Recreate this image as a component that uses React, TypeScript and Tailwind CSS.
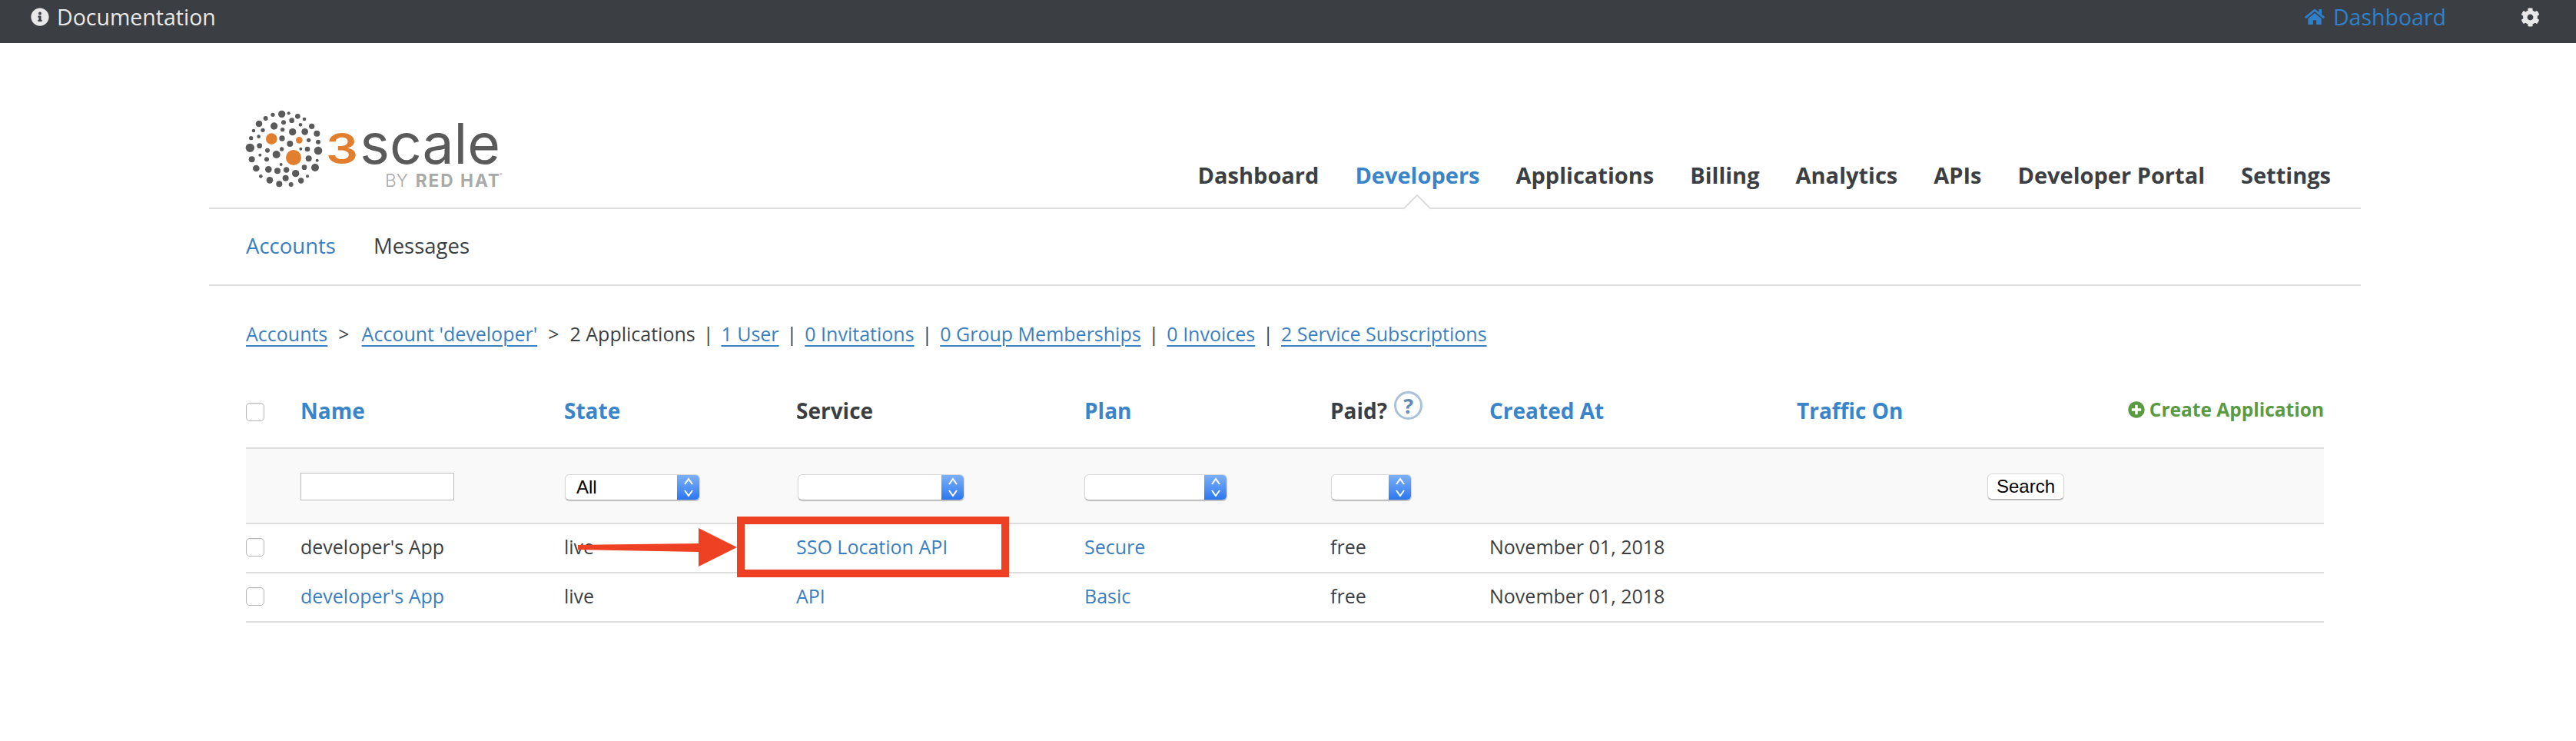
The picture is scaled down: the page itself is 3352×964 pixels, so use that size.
import React from "react";
import { FaInfoCircle, FaHome, FaCog, FaPlusCircle } from "react-icons/fa";

const gray: [number, number, number][] = [
  [200,55,14],[227,52,6],[165,58,8],[262,64,10],[137,72,9],[288,75,7],[239,80,10],[111,93,13],[207,88,9],[273,97,7],[317,103,11],[170,102,14],[90,120,7],[126,118,8],[203,116,8],[242,125,14],[290,124,13],[337,131,12],[80,149,8],[110,143,7],[201,150,11],[305,157,8],[342,164,9],[76,187,17],[113,179,10],[232,171,12],[274,191,6],[300,192,10],[342,198,16],[144,197,9],[200,192,8],[115,215,6],[179,213,15],[141,232,9],[305,229,12],[338,236,6],[83,232,12],[197,252,6],[100,267,13],[148,271,13],[183,277,12],[218,273,11],[288,263,10],[330,264,15],[254,287,14],[118,298,7],[300,298,6],[215,305,12],[153,313,13],[275,315,11],[190,328,12],[236,330,9],
];

function Logo() {
  return (
    <svg width="380" height="130" viewBox="0 0 1140 390" className="block">
      {gray.map(([x, y, r], i) => <circle key={i} cx={x} cy={y} r={r} fill="#5a5a5a" />)}
      <circle cx="160" cy="152" r="22" fill="#e17f2f" />
      <circle cx="268" cy="157" r="13" fill="#e17f2f" />
      <circle cx="246" cy="225" r="30" fill="#e17f2f" />
      <text x="372" y="250" fontFamily="Inter, sans-serif" fontSize="165" fontWeight="600" fill="#e17f2f" textLength="126" lengthAdjust="spacingAndGlyphs">3</text>
      <text x="505" y="250" fontFamily="Inter, sans-serif" fontSize="219" fontWeight="400" fill="#5a5a5a" textLength="548" lengthAdjust="spacingAndGlyphs">scale</text>
      <text x="603" y="340" fontFamily="Inter, sans-serif" fontSize="68" fontWeight="300" fill="#a9a9a9">BY</text>
      <text x="722" y="340" fontFamily="Inter, sans-serif" fontSize="68" fontWeight="700" letterSpacing="6" fill="#a9a9a9">RED HAT</text>
      <text x="1050" y="298" fontFamily="Inter, sans-serif" fontSize="16" fill="#a9a9a9">®</text>
    </svg>
  );
}

function Stepper() {
  return (
    <svg width="14" height="28" viewBox="0 0 14 28" fill="none" stroke="#fff" strokeWidth="2">
      <path d="M2 10 L7 3 L12 10" />
      <path d="M2 18 L7 25 L12 18" />
    </svg>
  );
}

function SelectBox({ width, label }: { width: string; label?: string }) {
  return (
    <div className={`${width} h-[34px] flex rounded-[6px] bg-white border border-[#d8d8d8] border-b-[#b0b0b0] shadow-[0_1px_1px_rgba(0,0,0,0.2)] overflow-hidden`}>
      <div className="flex-1 pl-[14px] text-[24px] leading-[32px] text-black font-['Liberation_Sans',sans-serif]">{label}</div>
      <div className="w-[29px] flex items-center justify-center bg-gradient-to-b from-[#7db0f5] to-[#2a76f2]">
        <Stepper />
      </div>
    </div>
  );
}

function Check() {
  return <input type="checkbox" className="block appearance-none w-[24px] h-[24px] rounded-[5px] bg-white border border-[#b4b4b4] shadow-[inset_0_1px_2px_rgba(0,0,0,0.08)]" />;
}

const blue = "text-[#3a80c0]";
const headBlue = "text-[#3a85c9]";
const linkU = "text-[#3a80c0] underline decoration-2 underline-offset-[5px]";
const th = "p-0 text-left font-bold text-[28px] leading-[40px]";
const td = "p-0 pb-[3px]";
const sel = "p-0 pt-[4px]";

function Gt({ first }: { first?: boolean }) { return <span className={first ? "ml-[14px] mr-[16px]" : "mx-[14px]"}>&gt;</span>; }
function Bar() { return <span className="mx-[10px]">|</span>; }

export default function App() {
  return (
    <div className="min-h-[964px] bg-white text-[#3b3f43] font-['Open_Sans',sans-serif]">
      <div className="h-[56px] bg-[#3b3f43] flex justify-between pl-[40px] pr-[47px]">
        <div className="h-[44px] flex items-center gap-[10px] text-[28.5px] text-[#e8e8e8]">
          <FaInfoCircle className="w-[24px] h-[24px]" />
          <span>Documentation</span>
        </div>
        <div className="h-[44px] flex items-center text-[28.5px]">
          <FaHome className="w-[26px] h-[24px] text-[#2f7fcb]" />
          <span className="ml-[11px] text-[#2f7fcb]">Dashboard</span>
          <FaCog className="ml-[97px] w-[25px] h-[25px] text-[#e8e8e8]" />
        </div>
      </div>

      <div className="ml-[272px] w-[2800px]">
        <div className="h-[216px] border-b-2 border-[#ddd] flex justify-between pl-[28px] pr-[39px]">
          <div className="pt-[74px]"><Logo /></div>
          <nav className="pt-[152px] flex gap-[47px] text-[29px] leading-[40px] font-bold">
            <span>Dashboard</span>
            <span className="relative text-[#3a85c9]">
              Developers
              <svg width="36" height="20" viewBox="0 0 36 20" fill="#fff" stroke="#ddd" strokeWidth="2" className="absolute left-[63px] top-[45px]">
                <path d="M0 19 L18 1 L36 19" />
              </svg>
            </span>
            <span>Applications</span>
            <span>Billing</span>
            <span>Analytics</span>
            <span>APIs</span>
            <span>Developer Portal</span>
            <span>Settings</span>
          </nav>
        </div>

        <div className="h-[100px] border-b-2 border-[#ddd] flex items-center gap-[49px] pl-[48px] pb-[2px] text-[27.5px]">
          <span className={blue}>Accounts</span>
          <span>Messages</span>
        </div>

        <div className="relative pl-[48px] pr-[48px]">
          <div className="h-[113px] pt-[44px] flex text-[25px] leading-[36px]">
            <span className={linkU}>Accounts</span><Gt first />
            <span className={linkU}>Account 'developer'</span><Gt />
            <span>2 Applications</span><Bar />
            <span className={linkU}>1 User</span><Bar />
            <span className={linkU}>0 Invitations</span><Bar />
            <span className={linkU}>0 Group Memberships</span><Bar />
            <span className={linkU}>0 Invoices</span><Bar />
            <span className={linkU}>2 Service Subscriptions</span>
          </div>

          <table className="w-[2704px] table-fixed border-collapse text-[25px]">
            <colgroup>
              <col className="w-[71px]" />
              <col className="w-[343px]" />
              <col className="w-[302px]" />
              <col className="w-[375px]" />
              <col className="w-[320px]" />
              <col className="w-[207px]" />
              <col className="w-[400px]" />
              <col className="w-[248px]" />
              <col className="w-[438px]" />
            </colgroup>
            <thead>
              <tr className="h-[98px] border-b-2 border-[#ddd]">
                <th className="p-0 pt-[4px]"><Check /></th>
                <th className={`${th} ${headBlue}`}>Name</th>
                <th className={`${th} ${headBlue}`}>State</th>
                <th className={th}>Service</th>
                <th className={`${th} ${headBlue}`}>Plan</th>
                <th className={th}>
                  <span className="inline-flex items-start">
                    Paid?
                    <span className="ml-[9px] -mt-[5px] w-[37px] h-[37px] rounded-full border-[3px] border-[#a9c1d9] flex items-center justify-center text-[27px] leading-none font-bold text-[#5f8bb5]">?</span>
                  </span>
                </th>
                <th className={`${th} ${headBlue}`}>Created At</th>
                <th className={`${th} ${headBlue}`}>Traffic On</th>
                <th className="p-0 pt-[2px] text-right font-bold text-[24.5px] text-[#5a9a41]">
                  <span className="inline-flex items-center gap-[6px]"><FaPlusCircle className="w-[22px] h-[22px]" />Create Application</span>
                </th>
              </tr>
            </thead>
            <tbody>
              <tr className="h-[98px] border-b-2 border-[#ddd] bg-[#f9f9f9]">
                <td className="p-0" />
                <td className="p-0 pt-[2px]"><input className="block w-[200px] h-[36px] bg-white border border-[#bbb]" /></td>
                <td className={sel}><SelectBox width="w-[176px] ml-[1px]" label="All" /></td>
                <td className={sel}><SelectBox width="w-[217px] ml-[2px]" /></td>
                <td className={sel}><SelectBox width="w-[186px]" /></td>
                <td className={sel}><SelectBox width="w-[105px] ml-[1px]" /></td>
                <td className="p-0" />
                <td className="p-0" />
                <td className="p-0 pt-[2px]">
                  <button className="block w-[100px] h-[34px] rounded-[6px] bg-white border border-[#d8d8d8] border-b-[#b0b0b0] shadow-[0_1px_1px_rgba(0,0,0,0.2)] text-[24px] leading-[30px] text-black font-['Liberation_Sans',sans-serif]">Search</button>
                </td>
              </tr>
              <tr className="h-[64px] border-b-2 border-[#ddd]">
                <td className="p-0 pb-[2px]"><Check /></td>
                <td className={td}>developer's App</td>
                <td className={td}>live</td>
                <td className={`${td} ${blue}`}>SSO Location API</td>
                <td className={`${td} ${blue}`}>Secure</td>
                <td className={td}>free</td>
                <td className={td}>November 01, 2018</td>
                <td className="p-0" />
                <td className="p-0" />
              </tr>
              <tr className="h-[64px] border-b-2 border-[#ddd]">
                <td className="p-0 pb-[2px]"><Check /></td>
                <td className={`${td} ${blue}`}>developer's App</td>
                <td className={td}>live</td>
                <td className={`${td} ${blue}`}>API</td>
                <td className={`${td} ${blue}`}>Basic</td>
                <td className={td}>free</td>
                <td className={td}>November 01, 2018</td>
                <td className="p-0" />
                <td className="p-0" />
              </tr>
            </tbody>
          </table>

          <div className="absolute left-[687px] top-[300px] w-[354px] h-[79px] border-[10px] border-[#ee4023]" />
          <svg width="208" height="50" viewBox="0 0 208 50" className="absolute left-[480px] top-[315px]" fill="#ee4023">
            <path d="M0 22 L157 20 V0 L207 25 L157 50 V31 L0 28 Z" />
          </svg>
        </div>
      </div>
    </div>
  );
}
